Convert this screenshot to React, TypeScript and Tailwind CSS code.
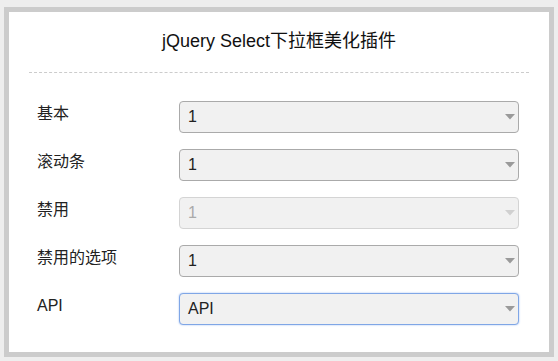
import { useState } from "react"

const rows = [
  { label: "基本", value: "1" },
  { label: "滚动条", value: "1" },
  { label: "禁用", value: "1", disabled: true },
  { label: "禁用的选项", value: "1" },
  { label: "API", value: "API", focused: true },
]

function FakeSelect({ value, disabled, focused }: { value: string; disabled?: boolean; focused?: boolean }) {
  let border = "border-[#aaaaaa]"
  if (disabled) border = "border-[#d4d4d4]"
  if (focused) border = "border-[#7fa6e6] shadow-[0_0_2px_#9dbcf0]"

  return (
    <div
      className={`flex h-8 w-[340px] items-center justify-between rounded-[4px] border bg-[#f1f1f1] pl-2 pr-[3px] ${border}`}
    >
      <span className={`text-[16px] ${disabled ? "text-[#aaaaaa]" : "text-[#222222]"}`}>{value}</span>
      <svg width="10" height="6" viewBox="0 0 10 6" className="mb-[1px]">
        <polygon points="0,0 10,0 5,5.5" fill={disabled ? "#d0d0d0" : "#9a9a9a"} />
      </svg>
    </div>
  )
}

export default function App() {
  const [items] = useState(rows)

  return (
    <div
      className="h-[361px] w-[558px] bg-[#eeeeee] px-1 pt-[7px]"
      style={{ fontFamily: '"Liberation Sans", "Noto Sans CJK SC", sans-serif' }}
    >
      <div className="h-[350px] w-[550px] border-[5px] border-[#cccccc] bg-white px-5">
        {/* title */}
        <div className="flex h-[61px] items-center justify-center border-b border-dashed border-[#cccccc] pb-[2px]">
          <h1 className="text-[18px] text-[#111111]">jQuery Select下拉框美化插件</h1>
        </div>

        {/* rows */}
        <div className="mt-[28px] flex flex-col gap-4 pl-2">
          {items.map((row) => (
            <div key={row.label} className="flex items-start">
              <div className="w-[142px] text-[16px] leading-[26px] text-[#222222]">{row.label}</div>
              <FakeSelect value={row.value} disabled={row.disabled} focused={row.focused} />
            </div>
          ))}
        </div>
      </div>
    </div>
  )
}
